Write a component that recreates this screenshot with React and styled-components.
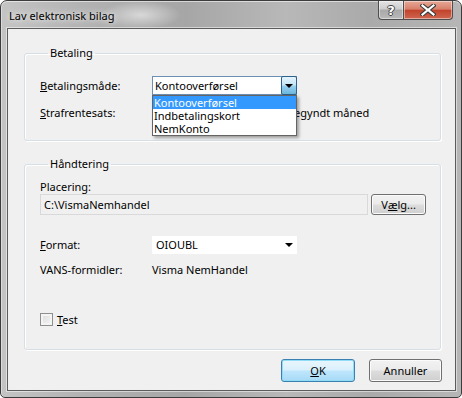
import React from 'react'
import styled, { createGlobalStyle } from 'styled-components'

const GlobalStyle = createGlobalStyle`
	html, body {
		margin: 0;
		padding: 0;
		background: #ffffff;
	}
	body {
		font-family: 'Noto Sans', 'DejaVu Sans', sans-serif;
		font-size: 11px;
		color: #000000;
	}
	* {
		box-sizing: border-box;
	}
`

const payments = ['Kontooverførsel', 'Indbetalingskort', 'NemKonto']

const App = () => {
	return (
		<>
			<GlobalStyle />
			<Window>
				<TitleBar>
					<Title>Lav elektronisk bilag</Title>
					<CaptionButtons>
						<HelpButton>?</HelpButton>
						<CloseButton>
							<svg width='16' height='12' viewBox='0 0 16 12'>
								<path
									d='M2.5 1.5 L8 6 L13.5 1.5 M2.5 10.5 L8 6 L13.5 10.5'
									stroke='#3a3a3a'
									strokeWidth='4.2'
									strokeLinecap='square'
									fill='none'
								/>
								<path
									d='M2.5 1.5 L8 6 L13.5 1.5 M2.5 10.5 L8 6 L13.5 10.5'
									stroke='#ffffff'
									strokeWidth='2.2'
									strokeLinecap='square'
									fill='none'
								/>
							</svg>
						</CloseButton>
					</CaptionButtons>
				</TitleBar>

				<Client>
					<GroupBox $pad='16px 14px 18px 15px'>
						<Legend>Betaling</Legend>
						<Row>
							<Label>
								<u>B</u>etalingsmåde:
							</Label>
							<ComboWrap>
								<OpenCombo>
									<ComboText>Kontooverførsel</ComboText>
									<DropButton>
										<Arrow />
									</DropButton>
								</OpenCombo>
								<DropList>
									{payments.map((p, i) => (
										<DropItem key={p} $active={i === 0}>
											{p}
										</DropItem>
									))}
								</DropList>
							</ComboWrap>
						</Row>
						<Row $top={8}>
							<Label>
								<u>S</u>trafrentesats:
							</Label>
							{/* rate input sits under the open list */}
							<RateBox />
							<Plain>pr. påbegyndt måned</Plain>
						</Row>
					</GroupBox>

					<GroupBox $pad='8px 14px 22px 15px' $top={16}>
						<Legend>Håndtering</Legend>
						<Line>Placering:</Line>
						<PathRow>
							<ReadOnlyField>C:\VismaNemhandel</ReadOnlyField>
							<Button $w={55} $h={21}>
								V<u>æ</u>lg...
							</Button>
						</PathRow>
						<Row $top={20}>
							<Label>
								<u>F</u>ormat:
							</Label>
							<FlatCombo>
								<span>OIOUBL</span>
								<Arrow />
							</FlatCombo>
						</Row>
						<Row $top={8} $h={15}>
							<Label>VANS-formidler:</Label>
							<Plain>Visma NemHandel</Plain>
						</Row>
						<CheckRow>
							<CheckBox />
							<span>
								<u>T</u>est
							</span>
						</CheckRow>
					</GroupBox>

					<ButtonRow>
						<Button $w={74} $h={23} $default>
							<u>O</u>K
						</Button>
						<Button $w={73} $h={23}>
							Annuller
						</Button>
					</ButtonRow>
				</Client>
			</Window>
		</>
	)
}

const Window = styled.div`
	width: 462px;
	height: 398px;
	border: 1px solid #3c3c3c;
	border-radius: 7px 7px 5px 5px;
	overflow: hidden;
	display: flex;
	flex-direction: column;
	background:
		radial-gradient(ellipse 40px 14px at 140px 14px, rgba(235, 235, 235, 0.7), rgba(235, 235, 235, 0) 100%),
		linear-gradient(90deg, #c4c4c4 0%, #b2b2b2 18%, #a6a6a6 40%, #b8b8b8 62%, #aaaaaa 80%, #b6b6b6 100%);
	box-shadow: inset 0 1px 0 rgba(255, 255, 255, 0.55), inset 1px 0 0 rgba(255, 255, 255, 0.4);
`

const TitleBar = styled.div`
	height: 27px;
	display: flex;
	align-items: flex-start;
	flex-shrink: 0;
`

const Title = styled.div`
	padding: 7px 0 0 8px;
	line-height: 15px;
	color: #000000;
	text-shadow: 0 0 8px rgba(255, 255, 255, 0.9), 0 0 4px rgba(255, 255, 255, 0.7);
`

const CaptionButtons = styled.div`
	margin-left: auto;
	margin-right: 8px;
	display: flex;
`

const CaptionButton = styled.div`
	height: 19px;
	display: flex;
	align-items: center;
	justify-content: center;
	border: 1px solid #4e4e4e;
	border-top: none;
	box-shadow: inset 0 0 0 1px rgba(255, 255, 255, 0.45);
`

const HelpButton = styled(CaptionButton)`
	width: 25px;
	border-right: none;
	border-radius: 0 0 0 4px;
	background: linear-gradient(180deg, #e4e4e4 0%, #cdcdcd 45%, #a9a9a9 50%, #b9b9b9 100%);
	color: #ffffff;
	font-family: 'DejaVu Sans', sans-serif;
	font-weight: bold;
	font-size: 13px;
	text-shadow: 1px 0 0 #444, -1px 0 0 #444, 0 1px 0 #444, 0 -1px 0 #444;
`

const CloseButton = styled(CaptionButton)`
	width: 50px;
	border-radius: 0 0 4px 0;
	background: linear-gradient(180deg, #e7a896 0%, #d8806b 45%, #c2442c 52%, #cf6650 100%);
`

const Client = styled.div`
	flex: 1;
	margin: 0 5px 6px 6px;
	border: 1px solid #5c5c5c;
	background: #f0f0f0;
	padding: 17px 14px 0 16px;
	display: flex;
	flex-direction: column;
	box-shadow: 0 0 0 1px rgba(255, 255, 255, 0.5);
`

const GroupBox = styled.fieldset`
	margin: ${(p) => p.$top || 0}px 0 0 0;
	padding: ${(p) => p.$pad};
	border: 1px solid #d5dfe5;
	border-radius: 3px;
	box-shadow: inset 1px 1px 0 #ffffff, 1px 1px 0 #ffffff;
	min-width: 0;
`

const Legend = styled.legend`
	margin-left: 8px;
	padding: 0 2px;
	line-height: 14px;
	color: #000000;
`

const Row = styled.div`
	display: flex;
	align-items: center;
	height: ${(p) => p.$h || 19}px;
	margin-top: ${(p) => p.$top || 0}px;
`

const Label = styled.div`
	width: 112px;
	flex-shrink: 0;
	line-height: 15px;
`

const Plain = styled.span`
	line-height: 15px;
	white-space: nowrap;
`

const ComboWrap = styled.div`
	position: relative;
	width: 145px;
	height: 19px;
	z-index: 2;
`

const OpenCombo = styled.div`
	height: 19px;
	border: 1px solid #6d8fb3;
	background: #ffffff;
	display: flex;
	align-items: center;
`

const ComboText = styled.span`
	flex: 1;
	padding-left: 2px;
	line-height: 15px;
`

const DropButton = styled.div`
	width: 16px;
	height: 19px;
	margin: -1px -1px -1px 0;
	border: 1px solid #2c628b;
	border-radius: 2px;
	display: flex;
	align-items: center;
	justify-content: center;
	background: linear-gradient(180deg, #e5f4fc 0%, #c4e5f6 48%, #98d1ef 52%, #6cb6de 100%);
`

const Arrow = styled.span`
	width: 0;
	height: 0;
	border-left: 4px solid transparent;
	border-right: 4px solid transparent;
	border-top: 4px solid #000000;
`

const DropList = styled.div`
	position: absolute;
	top: 19px;
	left: 0;
	width: 145px;
	border: 1px solid #646464;
	background: #ffffff;
	box-shadow: 2px 2px 3px rgba(0, 0, 0, 0.35);
`

const DropItem = styled.div`
	height: 13px;
	line-height: 13px;
	padding-left: 1px;
	white-space: nowrap;
	background: ${(p) => (p.$active ? '#3399ff' : '#ffffff')};
	color: ${(p) => (p.$active ? '#ffffff' : '#000000')};
`

const RateBox = styled.div`
	width: 98px;
	height: 19px;
	margin-right: 9px;
	border: 1px solid #abadb3;
	background: #ffffff;
`

const Line = styled.div`
	line-height: 15px;
`

const PathRow = styled.div`
	display: flex;
	gap: 3px;
	height: 21px;
`

const ReadOnlyField = styled.div`
	width: 329px;
	height: 21px;
	border: 1px solid #d9d9d9;
	background: #f0f0f0;
	padding-left: 3px;
	line-height: 19px;
	color: #000000;
`

const Button = styled.div`
	width: ${(p) => p.$w}px;
	height: ${(p) => p.$h}px;
	display: flex;
	align-items: center;
	justify-content: center;
	border: 1px solid ${(p) => (p.$default ? '#3c7fb1' : '#707070')};
	border-radius: 3px;
	background: ${(p) =>
		p.$default
			? 'linear-gradient(180deg, #eaf6fd 0%, #d9f0fc 48%, #bee6fd 52%, #a7d9f5 100%)'
			: 'linear-gradient(180deg, #f2f2f2 0%, #ebebeb 48%, #dddddd 52%, #cfcfcf 100%)'};
	box-shadow: inset 0 0 0 1px ${(p) => (p.$default ? '#8fdcf7' : '#fbfbfb')};
	line-height: 15px;
`

const FlatCombo = styled.div`
	width: 145px;
	height: 18px;
	background: #ffffff;
	display: flex;
	align-items: center;
	justify-content: space-between;
	padding: 0 4px 0 4px;

	span:first-child {
		line-height: 15px;
	}
`

const CheckRow = styled.div`
	display: flex;
	align-items: center;
	gap: 4px;
	height: 16px;
	margin-top: 34px;
	line-height: 15px;
`

const CheckBox = styled.span`
	width: 13px;
	height: 13px;
	border: 1px solid #8e8f8f;
	background: linear-gradient(135deg, #dcdcdc 0%, #f5f5f5 100%);
	box-shadow: inset 0 0 0 2px #f4f4f4;
`

const ButtonRow = styled.div`
	display: flex;
	justify-content: flex-end;
	gap: 14px;
	margin: 9px -1px 0 0;
`

export default App
